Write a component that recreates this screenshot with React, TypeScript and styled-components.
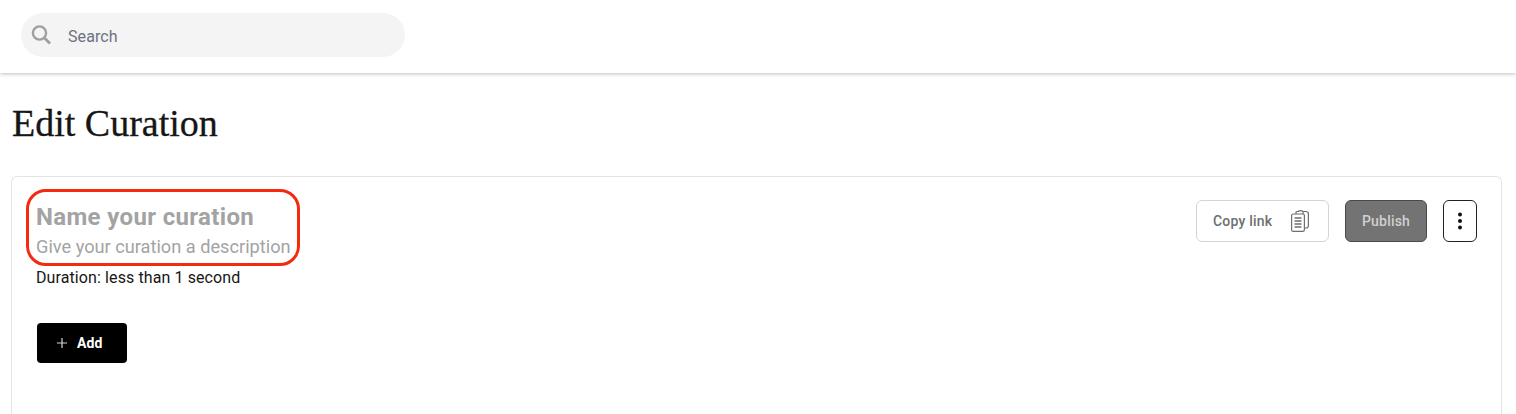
import React from 'react';
import styled, { createGlobalStyle } from 'styled-components';

const GlobalStyle = createGlobalStyle`
  html, body {
    margin: 0;
    padding: 0;
    height: 100%;
    background: #fff;
    overflow: hidden;
    font-family: 'Roboto', 'Liberation Sans', sans-serif;
  }
`;

const TopBar = styled.header`
  height: 73px;
  box-sizing: border-box;
  padding: 13px 21px 0;
  background: #fff;
  box-shadow: 0 1px 4px rgba(0, 0, 0, 0.25);
`;

const SearchBox = styled.div`
  width: 384px;
  height: 44px;
  box-sizing: border-box;
  padding-left: 10px;
  display: flex;
  align-items: center;
  gap: 15px;
  border-radius: 22px;
  background: #f4f4f4;
  color: #6b7280;
  font-size: 16px;
  letter-spacing: 0.1px;
`;

const SearchLabel = styled.span`
  padding-top: 2px;
`;

const Main = styled.main`
  padding: 27px 14px 0 11px;
`;

const Title = styled.h1`
  margin: 0 0 30px 1px;
  height: 46px;
  line-height: 46px;
  font-family: 'Liberation Serif', serif;
  font-weight: 400;
  font-size: 38px;
  color: #161616;
  -webkit-text-stroke: 0.3px #161616;
`;

const Card = styled.section`
  height: 238px;
  box-sizing: border-box;
  padding: 23px 24px 0 25px;
  border: 1px solid #e4e4e4;
  border-bottom: none;
  border-radius: 6px 6px 0 0;
  display: flex;
  justify-content: space-between;
  align-items: flex-start;
`;

const Details = styled.div`
  display: flex;
  flex-direction: column;
  align-items: flex-start;
`;

const Annotated = styled.div`
  position: relative;
  display: flex;
  flex-direction: column;
  margin-left: -1px;
`;

const RedOutline = styled.div`
  position: absolute;
  left: -10px;
  top: -11px;
  width: 274px;
  height: 77px;
  box-sizing: border-box;
  border: 3.5px solid #f52a0c;
  border-radius: 20px;
`;

const NameText = styled.div`
  height: 34px;
  line-height: 34px;
  font-size: 24px;
  font-weight: 700;
  letter-spacing: 0.35px;
  color: #a3a3a3;
`;

const DescriptionText = styled.div`
  height: 26px;
  line-height: 26px;
  font-size: 18.2px;
  color: #a3a3a3;
  white-space: nowrap;
`;

const Duration = styled.div`
  margin: 7px 0 0 -1px;
  height: 22px;
  line-height: 22px;
  font-size: 16px;
  letter-spacing: 0.1px;
  color: #161616;
`;

const AddButton = styled.button`
  margin-top: 34px;
  width: 90px;
  height: 40px;
  display: flex;
  align-items: center;
  justify-content: flex-start;
  gap: 9px;
  padding: 0 0 0 19px;
  border: none;
  border-radius: 4px;
  background: #000;
  color: #fff;
  font-family: inherit;
  font-size: 14px;
  font-weight: 700;
  letter-spacing: 0.1px;
`;

const Actions = styled.div`
  display: flex;
  gap: 16px;
`;

const CopyButton = styled.button`
  width: 133px;
  height: 42px;
  display: flex;
  align-items: center;
  justify-content: flex-start;
  gap: 19px;
  padding: 0 0 0 16px;
  background: #fff;
  border: 1px solid #d4d4d4;
  border-radius: 6px;
  color: #6f6f6f;
  font-family: inherit;
  font-size: 14px;
  font-weight: 500;
  letter-spacing: 0.2px;
`;

const PublishButton = styled.button`
  width: 82px;
  height: 42px;
  padding: 0;
  background: #737373;
  border: 1px solid #4a4a4a;
  border-radius: 6px;
  color: #d0d0d0;
  font-family: inherit;
  font-size: 14px;
  font-weight: 500;
  letter-spacing: 0.2px;
`;

const MoreButton = styled.button`
  width: 34px;
  height: 42px;
  display: flex;
  align-items: center;
  justify-content: center;
  padding: 0;
  background: #fff;
  border: 1px solid #222;
  border-radius: 6px;
`;

const SearchIcon = () => (
  <svg width="22" height="22" viewBox="0 0 22 22" fill="none" stroke="#a0a0a0">
    <circle cx="8.5" cy="9" r="6.6" strokeWidth="2.4" />
    <path d="M13.5 14 L19 19.5" strokeWidth="2.8" />
  </svg>
);

const PlusIcon = () => (
  <svg width="12" height="12" viewBox="0 0 12 12" stroke="#d6d6d6" strokeWidth="1.2">
    <path d="M6 1 V11 M1 6 H11" />
  </svg>
);

const ClipboardIcon = () => (
  <svg width="18" height="22" viewBox="0 0 18 22" fill="none" stroke="#6f6f6f" strokeWidth="1.2">
    <path d="M5 4 V2.5 Q5 1.5 6 1.5 H7 Q8 .6 9.5 .6 Q11 .6 12 1.5 H15 Q17.4 1.5 17.4 4 V15.5 Q17.4 18 15 18 H13.5" />
    <path d="M12 1.5 V4" />
    <rect x=".6" y="4" width="12.8" height="17.4" rx="1.6" fill="#fff" />
    <path d="M3.5 8 H10.5 M3.5 11 H10.5 M3.5 14 H10.5 M3.5 17 H10.5" strokeWidth="1.3" />
  </svg>
);

const DotsIcon = () => (
  <svg width="4" height="18" viewBox="0 0 4 18" fill="#111">
    <circle cx="2" cy="2.5" r="2" />
    <circle cx="2" cy="9" r="2" />
    <circle cx="2" cy="15.5" r="2" />
  </svg>
);

export default function App() {
  return (
    <>
      <GlobalStyle />
      <TopBar>
        <SearchBox>
          <SearchIcon />
          <SearchLabel>Search</SearchLabel>
        </SearchBox>
      </TopBar>
      <Main>
        <Title>Edit Curation</Title>
        <Card>
          <Details>
            <Annotated>
              <NameText>Name your curation</NameText>
              <DescriptionText>Give your curation a description</DescriptionText>
              <RedOutline />
            </Annotated>
            <Duration>Duration: less than 1 second</Duration>
            <AddButton>
              <PlusIcon />
              Add
            </AddButton>
          </Details>
          <Actions>
            <CopyButton>
              Copy link
              <ClipboardIcon />
            </CopyButton>
            <PublishButton>Publish</PublishButton>
            <MoreButton>
              <DotsIcon />
            </MoreButton>
          </Actions>
        </Card>
      </Main>
    </>
  );
}
